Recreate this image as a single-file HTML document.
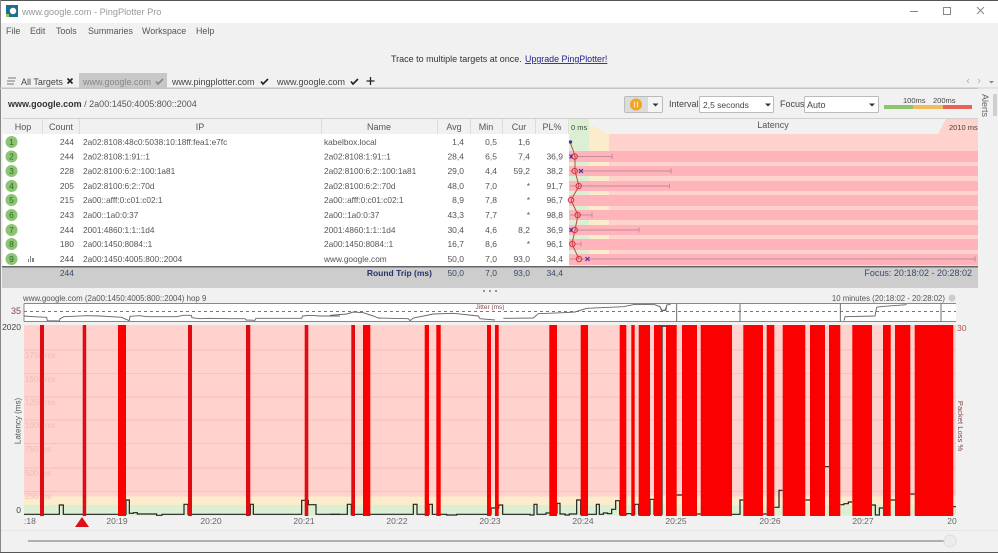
<!DOCTYPE html>
<html><head><meta charset="utf-8"><title>PingPlotter Pro</title>
<style>
html,body{margin:0;padding:0;background:#f1f1f1;width:998px;height:553px;overflow:hidden}
svg{display:block;position:absolute;left:0;top:0;font-family:"Liberation Sans",sans-serif;font-size:8.5px;fill:#444;filter:blur(.3px)}
</style></head><body>
<svg width="998" height="553" viewBox="0 0 998 553" xmlns="http://www.w3.org/2000/svg">
<rect width="998" height="553" fill="#f1f1f1"/>
<rect y="0" width="998" height="23" fill="#fff"/>
<rect x="0" y="0" width="998" height="1" fill="#555"/>
<rect x="0" y="0" width="1" height="553" fill="#888"/>
<rect x="0" y="552" width="998" height="1" fill="#555"/>
<!-- title -->
<rect x="6" y="5" width="12" height="12" fill="#1d6f94"/><circle cx="13" cy="11" r="3.2" fill="#fff"/><rect x="6" y="14" width="3" height="3" fill="#9dc45f"/>
<text x="22" y="15" font-size="9.2" style="fill:#999">www.google.com - PingPlotter Pro</text>
<rect x="910" y="11" width="8" height="1" fill="#888"/>
<rect x="943.500" y="7.500" width="7" height="7" fill="none" stroke="#888"/>
<path d="M977 7l7 7M984 7l-7 7" stroke="#888" fill="none"/>
<!-- menu -->
<g font-size="8.900" style="fill:#555"><text x="6" y="34">File</text><text x="30" y="34">Edit</text><text x="56" y="34">Tools</text><text x="88" y="34">Summaries</text><text x="142" y="34">Workspace</text><text x="196" y="34">Help</text></g>
<!-- notice -->
<text x="391" y="62" font-size="9" style="fill:#333">Trace to multiple targets at once.</text>
<text x="525" y="62" font-size="8.900" text-decoration="underline" style="fill:#23238e">Upgrade PingPlotter!</text>
<!-- tabs -->
<rect x="79" y="73" width="88" height="15" fill="#c8c8c8"/>
<path d="M8 78h8M7 81h8M7 84h7" stroke="#777" stroke-width="1"/>
<g font-size="9"><text x="21" y="85">All Targets</text><text x="83" y="85" style="fill:#888">www.google.com</text><text x="172" y="85">www.pingplotter.com</text><text x="277" y="85">www.google.com</text></g>
<path d="M67.500 78.500l5 5M72.500 78.500l-5 5" stroke="#222" stroke-width="1.600" fill="none"/>
<path d="M156 81.500l2 2.500 5-5" stroke="#888" stroke-width="1.600" fill="none"/>
<path d="M261 81.500l2 2.500 5-5" stroke="#222" stroke-width="1.600" fill="none"/>
<path d="M351 81.500l2 2.500 5-5" stroke="#222" stroke-width="1.600" fill="none"/>
<path d="M370.500 77v8M366.500 81h8" stroke="#222" stroke-width="1.300"/>
<path d="M969 79l-2 2 2 2M978 79l2 2-2 2" stroke="#bbb" fill="none"/><path d="M989 81h5l-2.500 2.500z" fill="#888"/>
<rect x="0" y="87.500" width="978" height="1.500" fill="#c4c4c4"/>
<rect x="978" y="87.500" width="20" height="1" fill="#d4d4d4"/>
<!-- path -->
<text x="8" y="107" font-size="9"><tspan font-weight="bold" style="fill:#333">www.google.com</tspan><tspan style="fill:#555"> / 2a00:1450:4005:800::2004</tspan></text>
<!-- toolbar -->
<rect x="624.500" y="96.500" width="38" height="16" rx="1.500" fill="#f4f4f4" stroke="#bbb"/>
<rect x="625" y="97" width="23" height="15" fill="#dcdcdc"/>
<circle cx="636" cy="104.500" r="6" fill="#f2a31f"/>
<path d="M634.500 101.500v6M637.500 101.500v6" stroke="#fbe7bd" stroke-width="1.200"/>
<path d="M652.500 103.500h6l-3 3z" fill="#333"/>
<text x="669" y="107" font-size="9">Interval</text>
<rect x="699.500" y="96.500" width="74" height="16" rx="1" fill="#fff" stroke="#bbb"/>
<text x="703" y="108" font-size="8.500">2,5 seconds</text>
<path d="M765 103.500h6l-3 3z" fill="#333"/>
<text x="780" y="107" font-size="9">Focus</text>
<rect x="804.500" y="96.500" width="74" height="16" rx="1" fill="#fff" stroke="#bbb"/>
<text x="807" y="108" font-size="9">Auto</text>
<path d="M869 103.500h6l-3 3z" fill="#333"/>
<text x="903" y="103" font-size="7.500">100ms</text><text x="933" y="103" font-size="7.500">200ms</text>
<rect x="884" y="105" width="30" height="4" fill="#8fc46f"/><rect x="913" y="105" width="30" height="4" fill="#f2bb5c"/><rect x="943" y="105" width="29" height="4" fill="#ea6257"/>
<text transform="translate(982,94) rotate(90)" font-size="9" style="fill:#666">Alerts</text>
<rect x="993" y="94" width="4" height="22" fill="#cfcfcf"/>
<!-- table header -->
<rect x="3" y="119" width="975" height="15" fill="#f1f1f1"/>
<rect x="3" y="118" width="975" height="1" fill="#d0d0d0"/>
<g fill="#fff"><rect x="3" y="134" width="566" height="133"/></g>
<g stroke="#dcdcdc"><path d="M42.500 119v15M79.500 119v15M321.500 119v15M437.500 119v15M470.500 119v15M502.500 119v15M535.500 119v15M568.500 119v15" fill="none"/></g>
<g font-size="9" text-anchor="middle" style="fill:#555"><text x="23" y="130">Hop</text><text x="61" y="130">Count</text><text x="200" y="130">IP</text><text x="379" y="130">Name</text><text x="454" y="130">Avg</text><text x="486" y="130">Min</text><text x="519" y="130">Cur</text><text x="552" y="130">PL%</text><text x="773" y="128">Latency</text></g>
<!-- latency header/gutter -->
<path d="M570 119h19l1 15h-20z" fill="#dcefd3"/>
<path d="M589 124l20 10h-20z" fill="#fbeccb"/>
<path d="M938 134l8-15h32v15z" fill="#ffd2cd"/>
<text x="571" y="130" font-size="7.500" style="fill:#444">0 ms</text>
<text x="949" y="130" font-size="7.500" style="fill:#444">2010 ms</text>
<!-- latency bg -->
<rect x="569" y="134" width="20" height="133" fill="#dcefd3"/>
<rect x="589" y="134" width="20" height="133" fill="#fbeccb"/>
<rect x="609" y="134" width="369" height="133" fill="#ffd2cd"/>
<g fill="#ffb3bb"><rect x="569" y="151" width="409" height="11"/><rect x="569" y="166" width="409" height="10"/><rect x="569" y="181" width="409" height="10"/><rect x="569" y="195" width="409" height="11"/><rect x="569" y="210" width="409" height="10"/><rect x="569" y="225" width="409" height="10"/><rect x="569" y="239" width="409" height="11"/><rect x="569" y="254" width="409" height="11"/></g>
<g stroke="#c98a97" stroke-width="1" fill="none">
<path d="M575 156.500H612M612 154v5M570 171H671M671 168.500v5M570 186H669.500M669.500 183.500v5M570 215H592M592 212.500v5M575 230H639M639 227.500v5M572 244H581M581 241.500v5M570 259H975M975 256.500v5"/></g>
<polyline points="570,142 573,150 575,156.500 575,171 579,186 571,200 578,215 575,230 572,244 579,259" fill="none" stroke="#bb4a4a" stroke-width="1"/>
<g fill="none" stroke="#d83a46" stroke-width="1.100"><circle cx="574.700" cy="156.500" r="2.700"/><circle cx="574.700" cy="171" r="2.700"/><circle cx="578.700" cy="186" r="2.700"/><circle cx="571" cy="200" r="2.700"/><circle cx="577.700" cy="215" r="2.700"/><circle cx="574.700" cy="230" r="2.700"/><circle cx="572.300" cy="244" r="2.700"/><circle cx="579" cy="259" r="2.700"/></g>
<circle cx="570.500" cy="142" r="1.700" fill="#50358f"/>
<g stroke="#5a2aa0" stroke-width="1.200" fill="none"><path d="M569.500 154.500l3 4M572.500 154.500l-3 4M579 169l4 4M583 169l-4 4M569.500 228l3 4M572.500 228l-3 4M585.500 257l4 4M589.500 257l-4 4"/></g>
<!-- table rows -->
<g fill="#8cc474"><circle cx="11.500" cy="142" r="6"/><circle cx="11.500" cy="156.500" r="6"/><circle cx="11.500" cy="171" r="6"/><circle cx="11.500" cy="186" r="6"/><circle cx="11.500" cy="200" r="6"/><circle cx="11.500" cy="215" r="6"/><circle cx="11.500" cy="230" r="6"/><circle cx="11.500" cy="244" r="6"/><circle cx="11.500" cy="259" r="6"/></g>
<g font-size="8.500" text-anchor="middle" style="fill:#2d6b25"><text x="11.500" y="145">1</text><text x="11.500" y="159.500">2</text><text x="11.500" y="174">3</text><text x="11.500" y="189">4</text><text x="11.500" y="203">5</text><text x="11.500" y="218">6</text><text x="11.500" y="233">7</text><text x="11.500" y="247">8</text><text x="11.500" y="262">9</text></g>
<path d="M28 259h1v3h-1zM30 256h1v6h-1zM32 258h2v4h-2z" fill="#888"/>
<g font-size="8.500" style="fill:#555">
<g text-anchor="end"><text x="74" y="145">244</text><text x="74" y="159.500">244</text><text x="74" y="174">228</text><text x="74" y="189">205</text><text x="74" y="203">215</text><text x="74" y="218">243</text><text x="74" y="233">244</text><text x="74" y="247">180</text><text x="74" y="262">244</text>
<text x="464" y="145">1,4</text><text x="464" y="159.500">28,4</text><text x="464" y="174">29,0</text><text x="464" y="189">48,0</text><text x="464" y="203">8,9</text><text x="464" y="218">43,3</text><text x="464" y="233">30,4</text><text x="464" y="247">16,7</text><text x="464" y="262">50,0</text>
<text x="497" y="145">0,5</text><text x="497" y="159.500">6,5</text><text x="497" y="174">4,4</text><text x="497" y="189">7,0</text><text x="497" y="203">7,8</text><text x="497" y="218">7,7</text><text x="497" y="233">4,6</text><text x="497" y="247">8,6</text><text x="497" y="262">7,0</text>
<text x="530" y="145">1,6</text><text x="530" y="159.500">7,4</text><text x="530" y="174">59,2</text><text x="530" y="189">*</text><text x="530" y="203">*</text><text x="530" y="218">*</text><text x="530" y="233">8,2</text><text x="530" y="247">*</text><text x="530" y="262">93,0</text>
<text x="563" y="159.500">36,9</text><text x="563" y="174">38,2</text><text x="563" y="189">91,7</text><text x="563" y="203">96,7</text><text x="563" y="218">98,8</text><text x="563" y="233">36,9</text><text x="563" y="247">96,1</text><text x="563" y="262">34,4</text></g>
<g font-size="8.300"><text x="83" y="145">2a02:8108:48c0:5038:10:18ff:fea1:e7fc</text><text x="83" y="159.500">2a02:8108:1:91::1</text><text x="83" y="174">2a02:8100:6:2::100:1a81</text><text x="83" y="189">2a02:8100:6:2::70d</text><text x="83" y="203">2a00::afff:0:c01:c02:1</text><text x="83" y="218">2a00::1a0:0:37</text><text x="83" y="233">2001:4860:1:1::1d4</text><text x="83" y="247">2a00:1450:8084::1</text><text x="83" y="262">2a00:1450:4005:800::2004</text>
<text x="324" y="145">kabelbox.local</text><text x="324" y="159.500">2a02:8108:1:91::1</text><text x="324" y="174">2a02:8100:6:2::100:1a81</text><text x="324" y="189">2a02:8100:6:2::70d</text><text x="324" y="203">2a00::afff:0:c01:c02:1</text><text x="324" y="218">2a00::1a0:0:37</text><text x="324" y="233">2001:4860:1:1::1d4</text><text x="324" y="247">2a00:1450:8084::1</text><text x="324" y="262">www.google.com</text></g>
</g>
<!-- summary -->
<rect x="2" y="267" width="976" height="21" fill="#cdcdcd"/>
<rect x="2" y="266" width="976" height="1.500" fill="#666"/>
<g font-size="8.500" text-anchor="end" style="fill:#3a4a6a"><text x="74" y="276">244</text><text x="432" y="276" font-weight="bold" style="fill:#24346a">Round Trip (ms)</text><text x="464" y="276">50,0</text><text x="497" y="276">7,0</text><text x="530" y="276">93,0</text><text x="563" y="276">34,4</text><text x="972" y="276" font-size="9">Focus: 20:18:02 - 20:28:02</text></g>
<g fill="#777"><circle cx="484" cy="291" r="1"/><circle cx="490" cy="291" r="1"/><circle cx="496" cy="291" r="1"/></g>
<!-- graph labels -->
<text x="23" y="301" font-size="7.900" style="fill:#555">www.google.com (2a00:1450:4005:800::2004) hop 9</text>
<text x="945" y="301" font-size="7.800" text-anchor="end" style="fill:#555">10 minutes (20:18:02 - 20:28:02)</text>
<circle cx="952" cy="298" r="3.500" fill="#ccc"/>
<text x="21" y="314" font-size="9" text-anchor="end" style="fill:#844">35</text>
<text x="21" y="330" font-size="8.500" text-anchor="end">2020</text>
<text x="21" y="513" font-size="8.500" text-anchor="end">0</text>
<text x="957" y="331" font-size="8.500" style="fill:#a55">30</text>
<text transform="translate(20.500,421) rotate(-90)" font-size="8" text-anchor="middle" style="fill:#555">Latency (ms)</text>
<text transform="translate(958,426) rotate(90)" font-size="7.600" text-anchor="middle" style="fill:#844">Packet Loss %</text>
<!-- jitter -->
<rect x="24" y="303.500" width="932" height="18" fill="#fff"/>
<path d="M24 303.500H956M24 321.500H956" stroke="#888" fill="none"/>
<path d="M24 303.500V321.500" stroke="#888" fill="none"/>
<path d="M24 311.500H956" stroke="#777" stroke-dasharray="3 3" fill="none"/>
<text x="490" y="309" font-size="6.500" text-anchor="middle" style="fill:#844">Jitter (ms)</text>
<g transform="translate(0,290) scale(.33333)" fill="none" stroke="#666" stroke-width="2.800"><polyline points="72,78 100,80 140,82 142,92 178,93 180,86 192,80 260,77 300,78 365,82 378,88 388,92 390,79 420,77 440,80 530,80 550,76 574,76 576,83 600,86 630,85 690,86 735,86 738,90 765,91 768,85 905,85 908,78 930,76 960,78 1020,78"/></g>
<g transform="translate(330,290) scale(.33333)" fill="none" stroke="#666" stroke-width="2.800"><polyline points="0,76 50,72 70,66 100,68 130,78 145,84 235,86 240,92 250,84 310,72 370,70 445,78 450,86 495,90"/><polyline points="520,85 610,84 625,71 700,68 735,66 770,55 880,50 915,43 975,44 990,50 995,62 1005,60 1010,48"/></g>
<g transform="translate(660,290) scale(.33333)" fill="none" stroke="#666" stroke-width="2.800"><polyline points="0,50 5,60 18,62 20,45 32,43"/><path d="M50,41V95M240,41V95M541,41V95M843,41V95"/><polyline points="552,92 555,80 645,78 650,52 660,50 740,44"/></g>
<!-- main plot -->
<rect x="24" y="325" width="932" height="171.500" fill="#ffd2cd"/>
<rect x="24" y="496.500" width="932" height="9" fill="#fbeccb"/>
<rect x="24" y="505" width="932" height="10.500" fill="#dcefd3"/>
<path d="M24 350H956M24 373.500H956M24 397H956M24 420H956M24 443.500H956M24 468H956M24 491.500H956" stroke="#f3c3bd" fill="none"/>
<g font-size="8" style="fill:#eebcb6"><text x="25" y="358">1750 ms</text><text x="25" y="382">1500 ms</text><text x="25" y="405">1250 ms</text><text x="25" y="428">1000 ms</text><text x="25" y="452">750 ms</text><text x="25" y="476">500 ms</text><text x="25" y="499">250 ms</text></g>
<!-- latency line -->
<g transform="translate(0,290) scale(.33333)" fill="none" stroke="#222" stroke-width="3.600"><path d="M72,673H178V645H190V673H378V630H388V670H400V668H412V672H470V676H486V673H552V643H564V673H751V643H760V673H905V631H925V644H948V673H1020"/></g>
<g transform="translate(330,290) scale(.33333)" fill="none" stroke="#222" stroke-width="3.600"><path d="M0,673H52V643H64V673H250V643H261V673H297V643H307V673H350V675H380V673H483V654H506V645H518V673H600V675H612V643H621V673H648V669H681V640H690V672H705V675H718V672H740V630H752V673H799V643H808V673H820V669H833V671H845V658H857V632H869V673H889V671H904V673H914V643H926V673H960V628H972V673H996V108H1008"/></g>
<g transform="translate(660,290) scale(.33333)" fill="none" stroke="#222" stroke-width="3.600"><path d="M5,108H18M50,615H66M111,672H122M216,673H240V630H250M309,672H320M343,652H357V601H368M436,630H450M495,530H507M541,644H552V641H565V636H577M636,645H646V675H658V654H669M692,630H705M751,612H764M880,650H888"/></g>
<!-- loss bars -->
<g fill="#fa0000">
<rect x="40" y="325" width="4" height="191" fill="#e00a12"/><rect x="82.700" y="325" width="3.500" height="191" fill="#e00a12"/><rect x="118" y="325" width="8" height="191"/><rect x="188" y="325" width="4" height="191" fill="#e00a12"/><rect x="246" y="325" width="4.300" height="191" fill="#e00a12"/><rect x="304.700" y="325" width="3.600" height="191" fill="#e00a12"/>
<rect x="351.300" y="325" width="3.700" height="191" fill="#e00a12"/><rect x="363" y="325" width="7.300" height="191"/><rect x="424.700" y="325" width="4.300" height="191"/><rect x="436.300" y="325" width="4.400" height="191"/><rect x="487" y="325" width="4" height="191"/><rect x="495" y="325" width="3.700" height="191"/><rect x="549.300" y="325" width="7.700" height="191"/><rect x="580.700" y="325" width="7.300" height="191"/><rect x="619.700" y="325" width="6.600" height="191"/><rect x="631.300" y="325" width="3.400" height="191"/><rect x="638.700" y="325" width="11.300" height="191"/><rect x="654" y="325" width="8" height="191"/>
<rect x="666" y="325" width="10.700" height="191"/><rect x="682" y="325" width="15" height="191"/><rect x="700.700" y="325" width="31.300" height="191"/><rect x="743.300" y="325" width="19.700" height="191"/><rect x="766.700" y="325" width="7.600" height="191"/><rect x="782.700" y="325" width="22.600" height="191"/><rect x="810" y="325" width="15" height="191"/><rect x="829" y="325" width="11.300" height="191"/><rect x="852.300" y="325" width="19.700" height="191"/><rect x="883" y="325" width="7.700" height="191"/><rect x="895" y="325" width="15.300" height="191"/><rect x="914.700" y="325" width="38.600" height="191"/>
</g>
<!-- axis -->
<g font-size="8.500" style="fill:#666"><text x="24" y="524">:18</text><g text-anchor="middle"><text x="117" y="524">20:19</text><text x="211" y="524">20:20</text><text x="304" y="524">20:21</text><text x="397" y="524">20:22</text><text x="490" y="524">20:23</text><text x="583" y="524">20:24</text><text x="676" y="524">20:25</text><text x="770" y="524">20:26</text><text x="863" y="524">20:27</text><text x="952" y="524">20</text></g></g>
<path d="M75 527L82 517L89 527Z" fill="#e0101a"/>
<!-- slider -->
<rect x="1" y="530" width="997" height="1" fill="#e6e6e6"/>
<rect x="28" y="540" width="922" height="2" fill="#b0b0b0"/>
<circle cx="950" cy="541" r="6" fill="#ececec" stroke="#ddd"/>
</svg>
</body></html>
